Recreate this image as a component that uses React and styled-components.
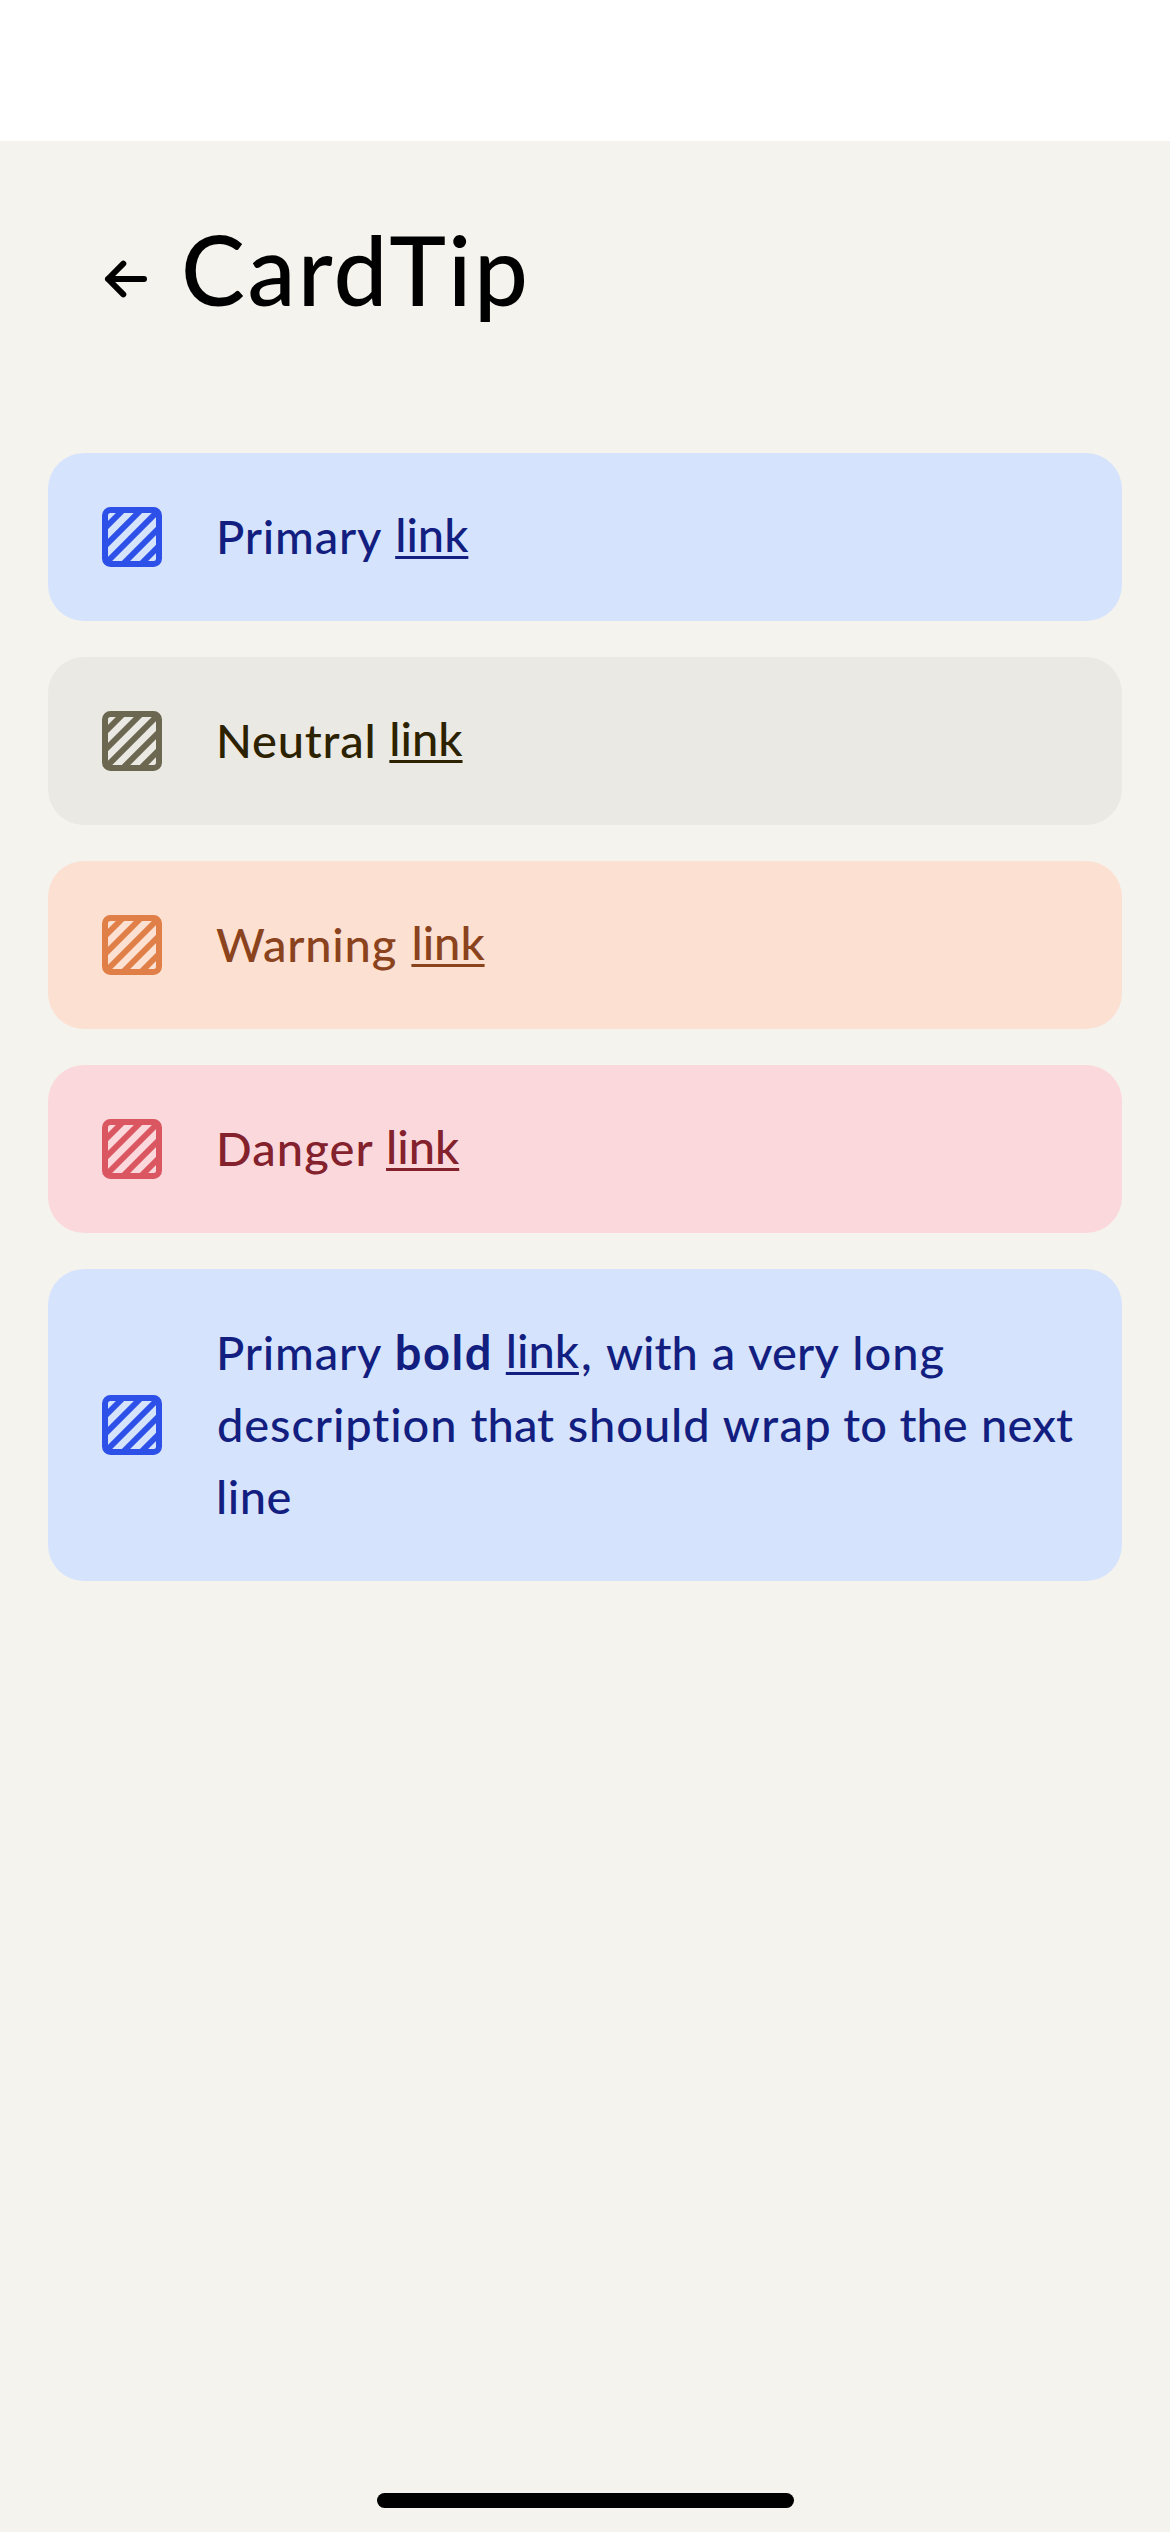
import React from "react";
import styled, { createGlobalStyle } from "styled-components";

const GlobalStyle = createGlobalStyle`
  *, *::before, *::after { box-sizing: border-box; }
  body {
    margin: 0;
    background: #ffffff;
    font-family: Lato, "Liberation Sans", sans-serif;
    font-variant-ligatures: none;
  }
`;

const Screen = styled.div`
  display: flex;
  flex-direction: column;
  height: 2532px;
  padding-top: 141px;
  background: #ffffff;
`;

const Page = styled.main`
  flex: 1;
  display: flex;
  flex-direction: column;
  background: #f4f3ee;
`;

const Header = styled.header`
  display: flex;
  align-items: center;
  gap: 19px;
  height: 276px;
  padding: 0 90px;
`;

const BackButton = styled.button`
  display: flex;
  width: 72px;
  height: 72px;
  padding: 0;
  border: 0;
  background: none;
  color: #000000;
`;

const Title = styled.h1`
  margin: 0;
  padding-bottom: 20px;
  font-size: 96px;
  font-weight: 500;
  line-height: 120px;
  letter-spacing: 2.4px;
  color: #000000;
`;

const TipList = styled.section`
  flex: 1;
  display: flex;
  flex-direction: column;
  gap: 36px;
  padding: 36px 48px 0;
`;

const Tip = styled.article`
  display: flex;
  align-items: center;
  gap: 48px;
  padding: 48px;
  border-radius: 36px;
  background: ${(p) => p.$tone.background};
  color: ${(p) => p.$tone.text};
`;

const TipIcon = styled.svg`
  flex: none;
  width: 72px;
  height: 72px;
  color: ${(p) => p.$tone.icon};
`;

const TipText = styled.p`
  flex: 1;
  margin: -1px 0 1px;
  font-size: 47px;
  font-weight: 500;
  line-height: 72px;
`;

const Word = styled.span`
  margin-left: ${(p) => p.$lead || 0}px;
  letter-spacing: ${(p) => p.$track || 0}px;
`;

const Bold = styled(Word).attrs({ as: "strong" })`
  font-weight: 700;
`;

const Link = styled(Word).attrs({ as: "a" })`
  position: relative;
  top: -2px;
  color: inherit;
  text-decoration: underline;
  text-decoration-thickness: 3px;
  text-underline-offset: 4px;
  text-decoration-skip-ink: none;
`;

const HomeBar = styled.div`
  align-self: center;
  width: 417px;
  height: 15px;
  margin-bottom: 24px;
  border-radius: 8px;
  background: #000000;
`;

const tones = {
  primary: { background: "#d6e3fd", text: "#121f80", icon: "#2c50e8" },
  neutral: { background: "#eae9e4", text: "#2d2200", icon: "#6b6750" },
  warning: { background: "#fce0d2", text: "#8a431c", icon: "#e07f48" },
  danger: { background: "#fbd8dc", text: "#83212c", icon: "#da5661" },
};

const tips = [
  { tone: "primary", label: "Primary", track: 0.8, linkLead: 1.1 },
  { tone: "neutral", label: "Neutral", track: 0.8, linkLead: 0.9 },
  { tone: "warning", label: "Warning", track: 0.8, linkLead: 2.5 },
  { tone: "danger", label: "Danger", track: 1.1, linkLead: 0.4 },
];

const description = [
  { text: "with", lead: 2.4 },
  { text: "a", lead: 2 },
  { text: "very", lead: 0.9, track: 0.2 },
  { text: "long", lead: 1.4, track: 1 },
  { text: "description", lead: 1, track: 0.9 },
  { text: "that", lead: 1.3 },
  { text: "should", lead: 1.8, track: 0.9 },
  { text: "wrap", lead: 0.3, track: 1.4 },
  { text: "to", lead: -0.8 },
  { text: "the", lead: 0.6 },
  { text: "next", lead: 1.5, track: 0.2 },
  { text: "line", track: 0.5 },
];

function PatternIcon({ tone }) {
  return (
    <TipIcon $tone={tone} viewBox="0 0 72 72" fill="none" stroke="currentColor" strokeWidth="6" aria-hidden="true">
      <rect x="9" y="9" width="54" height="54" rx="5.5" />
      <path d="M10 26L26 10M9 45L45 9M9 63L63 9M27 63L63 27M45 63L63 45" />
    </TipIcon>
  );
}

function BackIcon() {
  return (
    <svg width="72" height="72" viewBox="0 0 72 72" fill="none" stroke="currentColor" strokeWidth="6" strokeLinecap="round" strokeLinejoin="round" aria-hidden="true">
      <path d="M54 36H18M33.3 20.7L18 36L33.3 51.3" />
    </svg>
  );
}

export default function App() {
  return (
    <>
      <GlobalStyle />
      <Screen>
        <Page>
          <Header>
            <BackButton aria-label="Back">
              <BackIcon />
            </BackButton>
            <Title>CardTip</Title>
          </Header>
          <TipList>
            {tips.map((tip) => (
              <Tip key={tip.tone} $tone={tones[tip.tone]}>
                <PatternIcon tone={tones[tip.tone]} />
                <TipText>
                  <Word $track={tip.track}>{tip.label}</Word> <Link $lead={tip.linkLead}>link</Link>
                </TipText>
              </Tip>
            ))}
            <Tip $tone={tones.primary}>
              <PatternIcon tone={tones.primary} />
              <TipText>
                <Word $track={0.8}>Primary</Word>{" "}
                <Bold $lead={0.6} $track={1.6}>bold</Bold> <Link $lead={0.8}>link</Link>
                <Word $lead={2}>,</Word>
                {description.map((word) => (
                  <React.Fragment key={word.text}>
                    {" "}
                    <Word $lead={word.lead} $track={word.track}>{word.text}</Word>
                  </React.Fragment>
                ))}
              </TipText>
            </Tip>
          </TipList>
          <HomeBar />
        </Page>
      </Screen>
    </>
  );
}
